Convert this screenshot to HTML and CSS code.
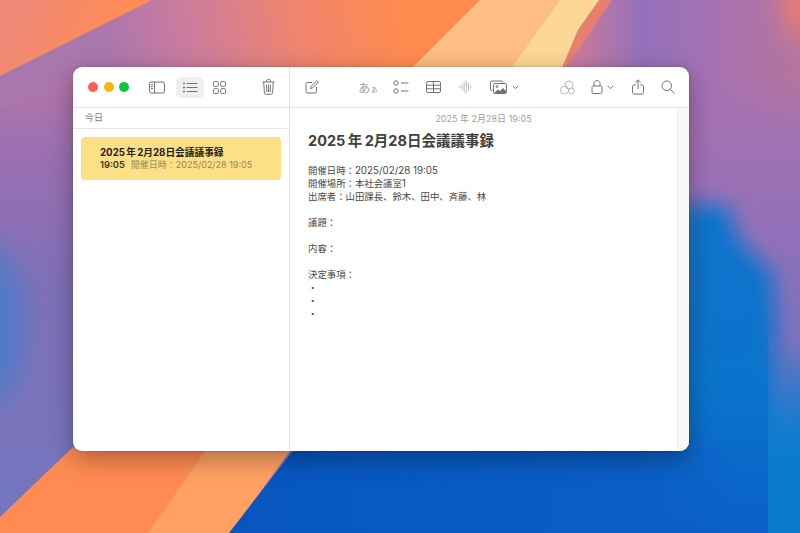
FILE: index.html
```html
<!DOCTYPE html>
<html lang="ja">
<head>
<meta charset="utf-8">
<title>メモ</title>
<link rel="stylesheet" href="styles.css">
</head>
<body>
<svg class="wallpaper" viewBox="0 0 800 533" preserveAspectRatio="none" aria-hidden="true">
  <defs>
    <linearGradient id="leftBase" x1="0" y1="0" x2="0" y2="1">
      <stop offset="0" stop-color="#b876a5"/>
      <stop offset=".14" stop-color="#b475a8"/>
      <stop offset=".3" stop-color="#9a6fb2"/>
      <stop offset=".55" stop-color="#7f70b8"/>
      <stop offset=".8" stop-color="#7a74bc"/>
      <stop offset="1" stop-color="#6f78c0"/>
    </linearGradient>
    <linearGradient id="topBand" gradientUnits="userSpaceOnUse" x1="110" y1="80" x2="400" y2="20">
      <stop offset="0" stop-color="#aa76ae"/>
      <stop offset=".3" stop-color="#cc7c9c"/>
      <stop offset=".65" stop-color="#f0846f"/>
      <stop offset="1" stop-color="#ff8b50"/>
    </linearGradient>
    <linearGradient id="coral" gradientUnits="userSpaceOnUse" x1="20" y1="0" x2="110" y2="40">
      <stop offset="0" stop-color="#ee8878"/>
      <stop offset="1" stop-color="#ff8c55"/>
    </linearGradient>
    <linearGradient id="rightTop" gradientUnits="userSpaceOnUse" x1="575" y1="0" x2="800" y2="0">
      <stop offset="0" stop-color="#c97a9a"/>
      <stop offset=".3" stop-color="#9470bb"/>
      <stop offset=".65" stop-color="#a871b1"/>
      <stop offset="1" stop-color="#b4749f"/>
    </linearGradient>
    <linearGradient id="rightMid" gradientUnits="userSpaceOnUse" x1="0" y1="80" x2="0" y2="480">
      <stop offset="0" stop-color="#a471b2" stop-opacity="0"/>
      <stop offset=".12" stop-color="#a471b2"/>
      <stop offset=".35" stop-color="#9470b8"/>
      <stop offset=".66" stop-color="#7a72bc"/>
      <stop offset=".92" stop-color="#3a78ca"/>
      <stop offset="1" stop-color="#0a7cd0"/>
    </linearGradient>
    <linearGradient id="columnBlue" gradientUnits="userSpaceOnUse" x1="0" y1="200" x2="0" y2="533">
      <stop offset="0" stop-color="#0a74cc"/>
      <stop offset="1" stop-color="#0a70cc"/>
    </linearGradient>
    <linearGradient id="columnFade" gradientUnits="userSpaceOnUse" x1="0" y1="300" x2="0" y2="533">
      <stop offset="0" stop-color="#0a74cc" stop-opacity="0"/>
      <stop offset=".35" stop-color="#0a74cc"/>
      <stop offset="1" stop-color="#0a60c8"/>
    </linearGradient>
    <linearGradient id="deepBlue" gradientUnits="userSpaceOnUse" x1="229" y1="0" x2="768" y2="0">
      <stop offset="0" stop-color="#0756bf"/>
      <stop offset=".75" stop-color="#0a5ec6"/>
      <stop offset=".95" stop-color="#0a5ec6" stop-opacity="0"/>
    </linearGradient>
    <linearGradient id="stripBlue" x1="0" y1="0" x2="0" y2="1">
      <stop offset="0" stop-color="#0a7cd0" stop-opacity="0"/>
      <stop offset=".6" stop-color="#0a7cd0"/>
      <stop offset="1" stop-color="#0a7cd0"/>
    </linearGradient>
    <filter id="soft" x="-30%" y="-30%" width="160%" height="160%"><feGaussianBlur stdDeviation="10"/></filter>
    <filter id="softer" x="-100%" y="-60%" width="300%" height="220%"><feGaussianBlur stdDeviation="14"/></filter>
  </defs>
  <rect width="800" height="533" fill="url(#leftBase)"/>
  <ellipse cx="-8" cy="325" rx="32" ry="80" fill="#4f7ac8" filter="url(#softer)"/>
  <polygon points="152,0 480,0 415,70 90,70 0,110 0,76" fill="url(#topBand)"/>
  <polygon points="0,0 152,0 12,70 0,76" fill="url(#coral)"/>
  <polygon points="480,0 562,0 511,70 410,70" fill="#fdbd85"/>
  <polygon points="560,0 601,0 578,30 562,70 510,70" fill="#fcd795"/>
  <polygon points="599,0 612,0 566,70 561,70 578,30" fill="#e9806f"/>
  <polygon points="612,0 800,0 800,130 560,130 564,70" fill="url(#rightTop)"/>
  <rect x="689" y="80" width="111" height="453" fill="url(#rightMid)"/>
  <ellipse cx="808" cy="-5" rx="26" ry="48" fill="#e87e72" filter="url(#softer)"/>
  <polygon points="680,205 728,205 738,240 772,272 776,330 768,400 768,560 680,560" fill="url(#columnBlue)" filter="url(#soft)"/>
  <rect x="600" y="300" width="168" height="233" fill="url(#columnFade)"/>
  <rect x="768" y="340" width="32" height="193" fill="url(#stripBlue)"/>
  <polygon points="73,447 293,447 230,533 0,533 0,517" fill="#ff8b52"/>
  <polygon points="208,447 293,447 230,533 148,533" fill="#ffa163"/>
  <polygon points="295,448 768,448 768,533 229,533" fill="url(#deepBlue)"/>
</svg>

<main class="window">
  <section class="sidebar">
    <header class="toolbar side-toolbar">
      <div class="lights">
        <i class="light red"></i><i class="light yellow"></i><i class="light green"></i>
      </div>
      <span class="tool tool-sidebar">
        <svg width="16" height="13" viewBox="0 0 16 13"><rect x=".5" y="1" width="15" height="11" rx="1.5"/><path d="M5.500 1v11M2 3.500h2M2 5.500h2M2 7.500h2"/></svg>
      </span>
      <span class="tool tool-list">
        <svg width="15" height="11" viewBox="0 0 15 11"><path d="M3.500 1.500h11M3.500 5.500h11M3.500 9.500h11"/><circle class="fill" cx="1" cy="1.500" r="1"/><circle class="fill" cx="1" cy="5.500" r="1"/><circle class="fill" cx="1" cy="9.500" r="1"/></svg>
      </span>
      <span class="tool tool-grid">
        <svg width="13" height="13" viewBox="0 0 13 13"><rect x=".5" y=".5" width="4.800" height="4.800" rx=".8"/><rect x="7.700" y=".5" width="4.800" height="4.800" rx=".8"/><rect x=".5" y="7.700" width="4.800" height="4.800" rx=".8"/><rect x="7.700" y="7.700" width="4.800" height="4.800" rx=".8"/></svg>
      </span>
      <span class="tool tool-trash">
        <svg width="13" height="16" viewBox="0 0 13 16"><path d="M.5 3h12M4.500 3V1.800c0-.7.400-1.100 1-1.100h2c.6 0 1 .4 1 1.100V3M1.700 3l.7 10.800c0 .8.500 1.400 1.300 1.400h5.600c.8 0 1.300-.6 1.300-1.400L11.300 3M4.500 5.500l.3 7.500M6.500 5.500v7.500M8.500 5.500l-.3 7.500"/></svg>
      </span>
    </header>
    <h2 class="group-label">今日</h2>
    <article class="note-item">
      <h3 class="note-item-title">2025 年 2月28日会議議事録</h3>
      <p class="note-item-meta"><b>19:05</b><span>開催日時：2025/02/28 19:05</span></p>
    </article>
  </section>

  <section class="content">
    <header class="toolbar main-toolbar">
      <span class="tool tool-compose">
        <svg width="14" height="14" viewBox="0 0 14 14"><path d="M11.500 7v4.800c0 .7-.5 1.200-1.200 1.200H2.200c-.7 0-1.200-.5-1.200-1.200V3.700c0-.7.500-1.200 1.200-1.200H7"/><path d="M5.500 8.500l.5-2L11.800.8l1.400 1.400L7.500 8z"/></svg>
      </span>
      <div class="tool-group center-tools">
        <span class="slot text-style">あ<small>ぁ</small></span>
        <span class="slot">
          <svg width="16" height="14" viewBox="0 0 16 14"><circle cx="3" cy="3" r="2.200"/><circle cx="3" cy="11" r="2.200"/><path d="M8 3h7.500M8 11h7.500"/></svg>
        </span>
        <span class="slot">
          <svg width="15" height="12" viewBox="0 0 15 12"><rect x=".5" y=".5" width="14" height="11" rx="1.500"/><path d="M.5 4.200h14M.5 7.800h14M7.500 .5v11"/></svg>
        </span>
        <span class="slot faint">
          <svg width="13" height="14" viewBox="0 0 13 14"><path d="M.7 6v2M2.900 4.500v5M5.100 1.500v11M7.300 .5v13M9.500 3v8M11.700 5.500v3"/></svg>
        </span>
        <span class="media">
          <svg width="17" height="14" viewBox="0 0 17 14"><path d="M2.500 10.500h-.7C1 10.500.5 10 .5 9.200V2.300C.5 1.500 1 1 1.800 1h9.400c.8 0 1.300.5 1.300 1.300v.7"/><rect x="3.500" y="3.500" width="13" height="10" rx="1.300"/><circle cx="7" cy="6.500" r="1"/><path class="fill" d="M4 13l4-3.500 2 1.500 3-3 3 3v2z"/></svg>
          <svg class="chevron" width="7" height="5" viewBox="0 0 7 5"><path d="M.8 1l2.700 2.700L6.200 1"/></svg>
        </span>
      </div>
      <div class="tool-group right-tools">
        <span class="slot-wide faint">
          <svg width="16" height="15" viewBox="0 0 16 15"><circle cx="9" cy="5" r="4"/><circle cx="4.500" cy="10" r="4"/><circle cx="11.500" cy="11" r="3"/></svg>
        </span>
        <span class="slot-wide lock">
          <svg width="12" height="14" viewBox="0 0 12 14"><rect x="1" y="6" width="10" height="7.500" rx="1.300"/><path d="M3 6V3.500C3 1.800 4.200.7 6 .7s3 1.100 3 2.800V6"/></svg>
          <svg class="chevron" width="7" height="5" viewBox="0 0 7 5"><path d="M.8 1l2.700 2.700L6.200 1"/></svg>
        </span>
        <span class="slot-wide">
          <svg width="12" height="16" viewBox="0 0 12 16"><path d="M6 10V1M3.300 3.400L6 .8l2.700 2.600M3.800 6H2C1.100 6 .5 6.600 .5 7.400v6.200c0 .9.600 1.400 1.500 1.400h8c.9 0 1.500-.5 1.500-1.400V7.400c0-.8-.6-1.400-1.500-1.400H8.200"/></svg>
        </span>
        <span class="slot-wide slot-search">
          <svg width="14" height="14" viewBox="0 0 14 14"><circle cx="5.800" cy="5.800" r="4.800"/><path d="M9.300 9.300l4.200 4.200"/></svg>
        </span>
      </div>
    </header>
    <div class="editor">
      <article class="note">
        <time class="note-date">2025 年 2月28日 19:05</time>
        <h1 class="note-title">2025 年 2月28日会議議事録</h1>
        <div class="note-body">
          <p>開催日時：<span class="num">2025/02/28 19:05</span></p>
          <p>開催場所：本社会議室<span class="num">1</span></p>
          <p>出席者：山田課長、鈴木、田中、斉藤、林</p>
          <p>&nbsp;</p>
          <p>議題：</p>
          <p>&nbsp;</p>
          <p>内容：</p>
          <p>&nbsp;</p>
          <p>決定事項：</p>
          <p>・</p>
          <p>・</p>
          <p>・</p>
        </div>
      </article>
      <div class="scroll-track"></div>
    </div>
  </section>
</main>
</body>
</html>
```

FILE: styles.css
```css
* { box-sizing: border-box; }

html, body {
  width: 800px;
  height: 533px;
  margin: 0;
  overflow: hidden;
}

body {
  padding: 67px 0 0 73px;
  background: #0a66cc;
  font-family: Inter, "Noto Sans CJK JP", "Noto Sans", sans-serif;
  color: #3a3a3a;
}

.wallpaper {
  position: absolute;
  inset: 0;
  width: 800px;
  height: 533px;
  display: block;
}

.window {
  position: relative;
  display: flex;
  width: 616px;
  height: 384px;
  background: #fff;
  border-radius: 9px;
  overflow: hidden;
  box-shadow: 0 8px 26px rgba(0, 0, 0, .32), 0 0 3px rgba(0, 0, 0, .18);
}

.window svg {
  fill: none;
  stroke: currentColor;
  stroke-width: 1;
  display: block;
}

.window svg .fill {
  fill: currentColor;
  stroke: none;
}

.toolbar {
  display: flex;
  align-items: center;
  height: 41px;
  border-bottom: 1px solid #e4e4e4;
  color: #737373;
  flex: none;
}

.tool {
  display: flex;
  align-items: center;
  justify-content: center;
}

/* sidebar */
.sidebar {
  width: 217px;
  flex: none;
  border-right: 1px solid #e2e2e2;
  display: flex;
  flex-direction: column;
}

.side-toolbar {
  padding-left: 15px;
}

.lights {
  display: flex;
  gap: 5.500px;
  width: 61px;
}

.light {
  width: 10px;
  height: 10px;
  border-radius: 50%;
}

.red { background: #ff5f57; }
.yellow { background: #fdb60d; }
.green { background: #0fc437; }

.tool-list {
  width: 28px;
  height: 21px;
  margin-left: 11px;
  background: #efefef;
  border-radius: 5px;
}

.tool-grid { margin-left: 9px; }
.tool-trash { margin-left: 36px; }

.group-label {
  margin: 0;
  height: 21px;
  padding-left: 12px;
  font-size: 9px;
  font-weight: 400;
  line-height: 19px;
  color: #777;
  border-bottom: 1px solid #e8e8e8;
  flex: none;
}

.note-item {
  margin: 8px 8px 0;
  height: 43px;
  padding: 9px 0 0 19px;
  background: #fde086;
  border-radius: 4px;
}

.note-item-title {
  margin: 0;
  font-size: 9.700px;
  font-weight: 700;
  line-height: 13px;
  word-spacing: -1px;
  color: #262218;
}

.note-item-meta {
  margin: 0;
  display: flex;
  gap: 6px;
  font-size: 9px;
  line-height: 12px;
  color: #978858;
}

.note-item-meta b {
  font-size: 9.300px;
  font-weight: 600;
  color: #3a3420;
}

/* main area */
.content {
  flex: 1;
  min-width: 0;
  display: flex;
  flex-direction: column;
}

.main-toolbar {
  padding-left: 15px;
}

.tool-group { display: flex; align-items: center; }

.center-tools { margin-left: 33px; }
.right-tools { margin-left: 31px; }

.slot, .slot-wide {
  display: flex;
  align-items: center;
  justify-content: center;
  gap: 4px;
  width: 32.500px;
}

.slot-wide { width: 35px; }
.slot-search { margin-left: -5px; }

.media {
  display: flex;
  align-items: center;
  gap: 5px;
  margin-left: 8px;
}

.faint { color: #b9b9b9; }

.text-style {
  gap: 0;
  font-size: 12px;
  color: #a5a5a5;
}

.text-style small {
  font-size: 8px;
  align-self: flex-end;
  margin-bottom: 2px;
}

.chevron { stroke-width: 1.300; }

.editor {
  flex: 1;
  display: flex;
  min-height: 0;
}

.note {
  flex: 1;
  min-width: 0;
  padding: 0 18px;
}

.note-date {
  display: block;
  padding-top: 4px;
  font-size: 9px;
  line-height: 13px;
  text-align: center;
  color: #a0a0a0;
}

.note-title {
  margin: 6px 0 0;
  font-size: 14.500px;
  font-weight: 700;
  line-height: 20px;
  word-spacing: -1px;
  color: #404040;
}

.note-body {
  margin-top: 13px;
  font-size: 9.400px;
  line-height: 13px;
  color: #474747;
}

.num { font-size: 9.800px; }

.note-body p { margin: 0; }

.scroll-track {
  width: 12px;
  flex: none;
  background: #f9f9f9;
  border-left: 1px solid #efefef;
}
```
